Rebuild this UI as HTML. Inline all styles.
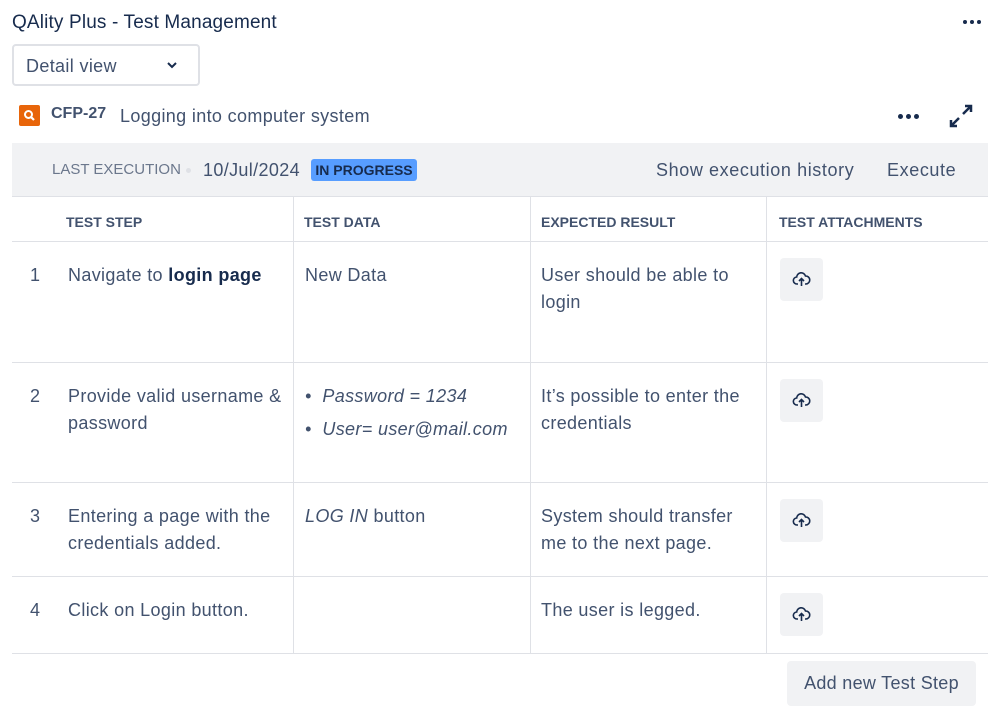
<!DOCTYPE html>
<html><head><style>
*{box-sizing:border-box;margin:0;padding:0}
body{width:999px;height:722px;background:#fff;font-family:"Liberation Sans",Arial,sans-serif;color:#42526e;position:relative;overflow:hidden}
.a{position:absolute}
.t{font-size:18px;line-height:27px;color:#42526e;letter-spacing:0.35px}
.vl{position:absolute;width:1px;background:#dfe1e6}
.hl{position:absolute;height:1px;background:#dfe1e6;left:12px;width:976px}
.hd{position:absolute;top:214px;font-size:14px;font-weight:bold;color:#42526e}
.up{position:absolute;left:780px;width:43px;height:43px;background:#f1f2f4;border-radius:4px}
.up svg{position:absolute;left:12px;top:12px}
.dots{position:absolute;display:flex;gap:3px}
.dots i{width:5px;height:5px;border-radius:50%;background:#172b4d;display:block}
</style></head><body>
<div class="a" style="left:12px;top:12px;font-size:19px;color:#172b4d;letter-spacing:0.15px">QAlity Plus - Test Management</div>
<div class="dots" style="left:963px;top:20px"><i style="width:4px;height:4px"></i><i style="width:4px;height:4px"></i><i style="width:4px;height:4px"></i></div>
<div class="a" style="left:12px;top:44px;width:188px;height:42px;border:2px solid #dfe1e6;border-radius:4px"></div>
<div class="a t" style="left:26px;top:53px">Detail view</div>
<svg class="a" style="left:166px;top:61px" width="12" height="8" viewBox="0 0 12 8"><path d="M2 2l4 4 4-4" fill="none" stroke="#172b4d" stroke-width="2"/></svg>
<div class="a" style="left:19px;top:105px;width:21px;height:21px;background:#e8650a;border-radius:2px"></div>
<svg class="a" style="left:22px;top:108px" width="15" height="15" viewBox="0 0 15 15"><circle cx="6.5" cy="6.5" r="3.5" fill="none" stroke="#fff" stroke-width="2"/><path d="M9 9l3 3" stroke="#fff" stroke-width="2.2"/></svg>
<div class="a" style="left:51px;top:105px;font-size:16px;font-weight:bold;color:#42526e">CFP-27</div>
<div class="a t" style="left:120px;top:103px">Logging into computer system</div>
<div class="dots" style="left:898px;top:114px"><i></i><i></i><i></i></div>
<svg class="a" style="left:948px;top:103px" width="26" height="26" viewBox="0 0 26 26"><path d="M15 11l8-8M17 3h6v6M11 15l-8 8M3 17v6h6" fill="none" stroke="#172b4d" stroke-width="2.5"/></svg>
<div class="a" style="left:12px;top:143px;width:976px;height:54px;background:#f1f2f4;border-bottom:1px solid #dfe1e6"></div>
<div class="a" style="left:52px;top:161px;font-size:15px;color:#6b778c">LAST EXECUTION</div>
<div class="a" style="left:186px;top:168px;width:5px;height:5px;border-radius:50%;background:#dfe1e6"></div>
<div class="a t" style="left:203px;top:157px">10/Jul/2024</div>
<div class="a" style="left:311px;top:159px;width:106px;height:22px;background:#579dff;border-radius:3px;font-size:14px;font-weight:bold;color:#172b4d;text-align:center;line-height:22px">IN PROGRESS</div>
<div class="a t" style="left:656px;top:157px;letter-spacing:0.6px">Show execution history</div>
<div class="a t" style="left:887px;top:157px;letter-spacing:0.6px">Execute</div>
<div class="hd" style="left:66px">TEST STEP</div>
<div class="hd" style="left:304px">TEST DATA</div>
<div class="hd" style="left:541px">EXPECTED RESULT</div>
<div class="hd" style="left:779px">TEST ATTACHMENTS</div>
<div class="vl" style="left:293px;top:197px;height:456px"></div>
<div class="vl" style="left:530px;top:197px;height:456px"></div>
<div class="vl" style="left:766px;top:197px;height:456px"></div>
<div class="hl" style="top:241px"></div>
<div class="hl" style="top:362px"></div>
<div class="hl" style="top:482px"></div>
<div class="hl" style="top:576px"></div>
<div class="hl" style="top:653px"></div>

<div class="a t" style="left:30px;top:262px">1</div>
<div class="a t" style="left:68px;top:262px">Navigate to <b style="color:#172b4d">login page</b></div>
<div class="a t" style="left:305px;top:262px">New Data</div>
<div class="a t" style="left:541px;top:262px;width:200px">User should be able to login</div>
<div class="up" style="top:258px"><svg width="19" height="19" viewBox="0 0 19 19"><path d="M6 14H5a3.5 3.5 0 0 1-.3-7A4.5 4.5 0 0 1 13.5 6 3.5 3.5 0 0 1 14 14h-1M9.5 9v7M7 11l2.5-2.5L12 11" fill="none" stroke="#172b4d" stroke-width="1.6"/></svg></div>

<div class="a t" style="left:30px;top:383px">2</div>
<div class="a t" style="left:68px;top:383px;width:220px">Provide valid username &amp; password</div>
<div class="a t" style="left:305px;top:383px;font-style:italic">• &nbsp;Password = 1234</div>
<div class="a t" style="left:305px;top:416px;font-style:italic">• &nbsp;User= user@mail.com</div>
<div class="a t" style="left:541px;top:383px;width:215px">It’s possible to enter the credentials</div>
<div class="up" style="top:379px"><svg width="19" height="19" viewBox="0 0 19 19"><path d="M6 14H5a3.5 3.5 0 0 1-.3-7A4.5 4.5 0 0 1 13.5 6 3.5 3.5 0 0 1 14 14h-1M9.5 9v7M7 11l2.5-2.5L12 11" fill="none" stroke="#172b4d" stroke-width="1.6"/></svg></div>

<div class="a t" style="left:30px;top:503px">3</div>
<div class="a t" style="left:68px;top:503px;width:220px">Entering a page with the credentials added.</div>
<div class="a t" style="left:305px;top:503px"><i>LOG IN</i> button</div>
<div class="a t" style="left:541px;top:503px;width:200px">System should transfer me to the next page.</div>
<div class="up" style="top:499px"><svg width="19" height="19" viewBox="0 0 19 19"><path d="M6 14H5a3.5 3.5 0 0 1-.3-7A4.5 4.5 0 0 1 13.5 6 3.5 3.5 0 0 1 14 14h-1M9.5 9v7M7 11l2.5-2.5L12 11" fill="none" stroke="#172b4d" stroke-width="1.6"/></svg></div>

<div class="a t" style="left:30px;top:597px">4</div>
<div class="a t" style="left:68px;top:597px">Click on Login button.</div>
<div class="a t" style="left:541px;top:597px">The user is legged.</div>
<div class="up" style="top:593px"><svg width="19" height="19" viewBox="0 0 19 19"><path d="M6 14H5a3.5 3.5 0 0 1-.3-7A4.5 4.5 0 0 1 13.5 6 3.5 3.5 0 0 1 14 14h-1M9.5 9v7M7 11l2.5-2.5L12 11" fill="none" stroke="#172b4d" stroke-width="1.6"/></svg></div>

<div class="a" style="left:787px;top:661px;width:189px;height:45px;background:#f1f2f4;border-radius:4px;font-size:18px;color:#42526e;text-align:center;line-height:45px;letter-spacing:0.3px">Add new Test Step</div>
</body></html>
